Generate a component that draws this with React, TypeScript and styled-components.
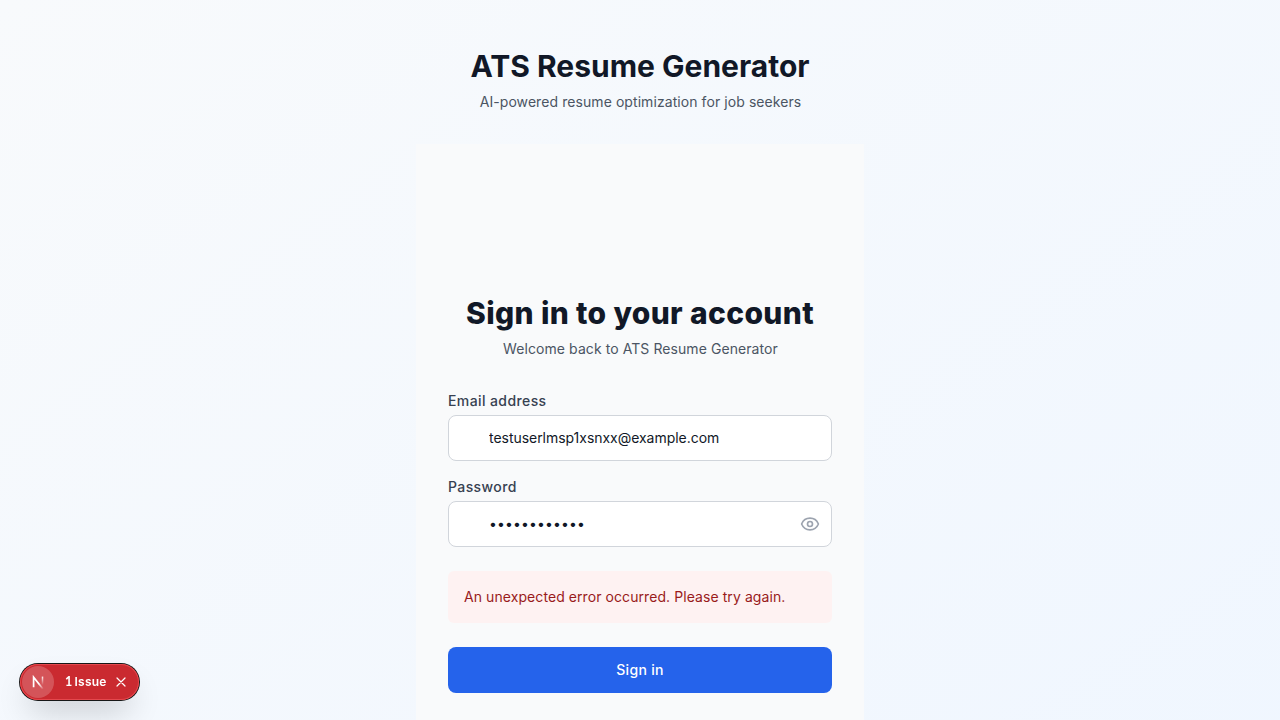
import React from "react";
import styled, { createGlobalStyle } from "styled-components";
import { Eye } from "lucide-react";

const Global = createGlobalStyle`
  *, *::before, *::after { box-sizing: border-box; }
  body { margin: 0; font-family: Inter, "Liberation Sans", sans-serif; color: #111827; overflow: hidden; }
  h1, h2, p { margin: 0; }
`;

const Viewport = styled.div`
  height: 100vh;
  overflow: hidden;
`;

const Page = styled.main`
  min-height: 912px;
  padding: 48px 0;
  display: flex;
  flex-direction: column;
  align-items: center;
  background: linear-gradient(to bottom right, #f8fafc, #eff6ff);
`;

const Header = styled.header`
  text-align: center;
  margin-bottom: 32px;
`;

const Title = styled.h1<{ $weight: number; $spacing: string }>`
  font-size: 30px;
  line-height: 36px;
  font-weight: ${(p) => p.$weight};
  letter-spacing: ${(p) => p.$spacing};
`;

const Subtitle = styled.p`
  margin-top: 8px;
  padding-left: 1px;
  font-size: 14px;
  line-height: 20px;
  letter-spacing: 0.075px;
  color: #4b5563;
`;

const Card = styled.section`
  width: 448px;
  height: 720px;
  padding: 151px 32px 48px;
  background: #f9fafb;
`;

const CardHeader = styled.div`
  text-align: center;
  margin-bottom: 32px;
`;

const Form = styled.form`
  display: flex;
  flex-direction: column;
  gap: 24px;
`;

const Fields = styled.div`
  display: flex;
  flex-direction: column;
  gap: 16px;
`;

const Label = styled.label`
  display: block;
  font-size: 14px;
  line-height: 20px;
  font-weight: 500;
  letter-spacing: 0.4px;
  color: #374151;
`;

const InputShell = styled.div`
  display: flex;
  align-items: center;
  height: 46px;
  margin-top: 4px;
  padding: 0 11px 0 40px;
  background: #fff;
  border: 1px solid #d1d5db;
  border-radius: 8px;
  color: #9ca3af;
`;

const Input = styled.input<{ $spacing: string }>`
  flex: 1;
  min-width: 0;
  height: 20px;
  padding: 0;
  border: 0;
  outline: 0;
  background: transparent;
  font: 14px/20px Inter, "Liberation Sans", sans-serif;
  letter-spacing: ${(p) => p.$spacing};
  color: #111827;
`;

const ErrorBox = styled.div`
  padding: 16px;
  border-radius: 6px;
  background: #fef2f2;
  color: #991b1b;
  font-size: 14px;
  line-height: 20px;
  letter-spacing: 0.075px;
`;

const SubmitButton = styled.button`
  height: 46px;
  border: 0;
  border-radius: 8px;
  background: #2563eb;
  color: #fff;
  font: 500 14px/20px Inter, "Liberation Sans", sans-serif;
  letter-spacing: 0.3px;
`;

const IssueBadge = styled.div`
  position: fixed;
  left: 20px;
  bottom: 20px;
  width: 119px;
  height: 36px;
  padding: 2px;
  display: flex;
  align-items: center;
  border-radius: 18px;
  background: #ca2a30;
  color: #fff;
  box-shadow: 0 0 0 1px #171717, inset 0 0 0 1px #e5484d, 0 16px 32px -8px rgba(0, 0, 0, 0.24);
`;

const LogoDisc = styled.div`
  width: 32px;
  height: 32px;
  padding-right: 1px;
  border-radius: 50%;
  display: grid;
  place-items: center;
  background: rgba(255, 255, 255, 0.2);
`;

const IssueText = styled.span`
  display: flex;
  align-items: baseline;
  gap: 2px;
  width: 42px;
  margin-left: 11px;
  font-size: 12px;
  line-height: 16px;
  font-weight: 600;
  letter-spacing: 0.25px;
  white-space: nowrap;
`;

const IssueCount = styled.span`
  font-family: Lato, sans-serif;
  font-size: 12.5px;
  font-weight: 700;
`;

const CloseIcon = styled.svg`
  margin-left: 9px;
`;

export default function App() {
  return (
    <Viewport>
      <Global />
      <Page>
        <Header>
          <Title $weight={700} $spacing="0px">ATS Resume Generator</Title>
          <Subtitle>AI-powered resume optimization for job seekers</Subtitle>
        </Header>
        <Card>
          <CardHeader>
            <Title as="h2" $weight={800} $spacing="0.35px">Sign in to your account</Title>
            <Subtitle>Welcome back to ATS Resume Generator</Subtitle>
          </CardHeader>
          <Form>
            <Fields>
              <div>
                <Label htmlFor="email">Email address</Label>
                <InputShell>
                  <Input id="email" type="email" $spacing="-0.035px" defaultValue="testuserlmsp1xsnxx@example.com" />
                </InputShell>
              </div>
              <div>
                <Label htmlFor="password">Password</Label>
                <InputShell>
                  <Input id="password" type="password" $spacing="0.13px" defaultValue="Passw0rd1234" />
                  <Eye size={20} />
                </InputShell>
              </div>
            </Fields>
            <ErrorBox>An unexpected error occurred. Please try again.</ErrorBox>
            <SubmitButton type="button">Sign in</SubmitButton>
          </Form>
        </Card>
      </Page>
      <IssueBadge>
        <LogoDisc>
          <svg width="14" height="14" viewBox="0 0 14 14" fill="none">
            <defs>
              <linearGradient id="diag" x1="8" y1="8.5" x2="12.5" y2="14" gradientUnits="userSpaceOnUse">
                <stop stopColor="#fff" />
                <stop offset="1" stopColor="#fff" stopOpacity="0" />
              </linearGradient>
              <linearGradient id="stem" x1="0" y1="1" x2="0" y2="10" gradientUnits="userSpaceOnUse">
                <stop stopColor="#fff" />
                <stop offset="1" stopColor="#fff" stopOpacity="0" />
              </linearGradient>
            </defs>
            <path d="M2.6 12.2V2.2L12 14" stroke="url(#diag)" strokeWidth="1.7" />
            <path d="M11.5 1.6V10" stroke="url(#stem)" strokeWidth="1.5" />
          </svg>
        </LogoDisc>
        <IssueText><IssueCount>1</IssueCount>Issue</IssueText>
        <CloseIcon width="10" height="10" viewBox="0 0 10 10">
          <path d="M1 1L9 9M9 1L1 9" stroke="#fff" strokeWidth="1.2" strokeLinecap="round" />
        </CloseIcon>
      </IssueBadge>
    </Viewport>
  );
}
